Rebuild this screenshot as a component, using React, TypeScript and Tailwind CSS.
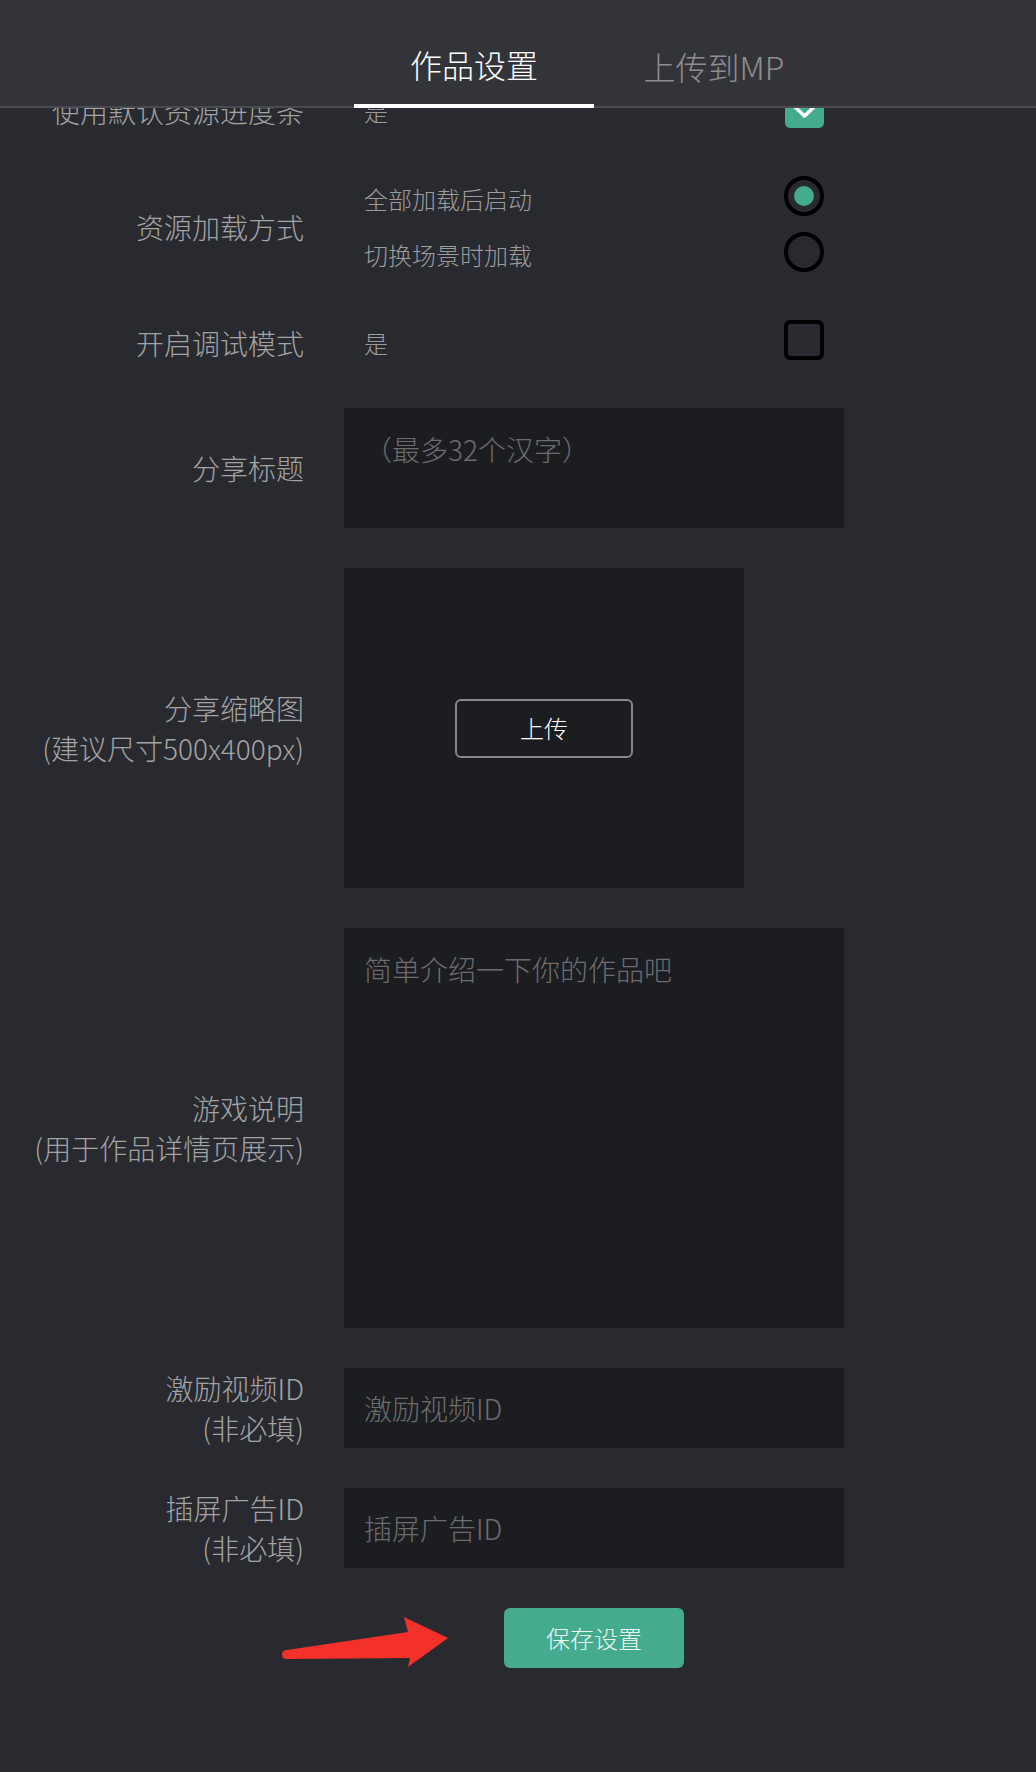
import React, { useState } from "react";

const Label: React.FC<{ lines: string[]; nudge?: boolean }> = ({ lines, nudge }) => (
  <div
    className={`w-[304px] shrink-0 text-right text-[28px] font-light leading-[40px] text-[#a3a3a5] ${
      nudge ? "pt-[5px]" : ""
    }`}
  >
    {lines.map((line) => (
      <div key={line}>{line}</div>
    ))}
  </div>
);

const Radio: React.FC<{ checked: boolean; onClick: () => void }> = ({ checked, onClick }) => (
  <button
    onClick={onClick}
    className="flex h-[40px] w-[40px] items-center justify-center rounded-full border-4 border-black"
  >
    {checked && <span className="h-[20px] w-[20px] rounded-full bg-[#45ab8e]" />}
  </button>
);

const Checkbox: React.FC<{ checked: boolean; onClick: () => void }> = ({ checked, onClick }) =>
  checked ? (
    <button
      onClick={onClick}
      className="flex h-[39px] w-[39px] items-center justify-center rounded-[5px] bg-[#45ab8e]"
    >
      <svg width="39" height="39" viewBox="0 0 39 39">
        <polyline
          points="9,17 19.5,27 30,17"
          fill="none"
          stroke="#ffffff"
          strokeWidth="3.5"
          strokeLinecap="round"
          strokeLinejoin="round"
        />
      </svg>
    </button>
  ) : (
    <button onClick={onClick} className="h-[40px] w-[40px] rounded-[6px] border-4 border-black" />
  );

const App: React.FC = () => {
  const [tab, setTab] = useState<"settings" | "upload">("settings");
  const [loadMode, setLoadMode] = useState<"all" | "scene">("all");
  const [useBar, setUseBar] = useState(true);
  const [debug, setDebug] = useState(false);

  const optionText = "pl-5 pt-[5px] text-[24px] font-light leading-[36px] text-[#9c9c9e]";
  const field =
    "w-[500px] bg-[#1c1d21] px-5 text-[28px] font-light text-[#d0d0d2] outline-none placeholder:text-[#6c6c6f]";

  return (
    <div className="relative min-h-[1772px] bg-[#292a2f] font-['Noto_Sans_CJK_SC','Noto_Sans',sans-serif]">
      {/* Tabs */}
      <div className="flex h-[108px] border-b-2 border-[#4a4b50] bg-[#333439] pl-[354px]">
        <button
          onClick={() => setTab("settings")}
          className={`h-[108px] w-[240px] self-start pt-[24px] text-center text-[32px] font-light leading-[48px] ${
            tab === "settings" ? "border-b-4 border-white text-white" : "text-[#8e8e90]"
          }`}
        >
          作品设置
        </button>
        <button
          onClick={() => setTab("upload")}
          className={`h-[108px] w-[240px] self-start pt-[24px] text-center text-[32px] font-light leading-[48px] ${
            tab === "upload" ? "border-b-4 border-white text-white" : "text-[#8e8e90]"
          }`}
        >
          上传到MP
        </button>
      </div>

      {/* Settings form, scrolled a little under the tab bar */}
      <div className="overflow-hidden">
        <div className="-mt-[20px] flex flex-col">
          <div className="flex h-[40px] items-center gap-10">
            <Label lines={["使用默认资源进度条"]} nudge />
            <div className="flex w-[500px] items-center justify-between pr-[20px]">
              <span className={optionText}>是</span>
              <Checkbox checked={useBar} onClick={() => setUseBar(!useBar)} />
            </div>
          </div>

          <div className="mt-12 flex h-[96px] items-center gap-10">
            <Label lines={["资源加载方式"]} nudge />
            <div className="flex w-[500px] flex-col gap-4 pr-[20px]">
              <div className="flex h-[40px] items-center justify-between">
                <span className={optionText}>全部加载后启动</span>
                <Radio checked={loadMode === "all"} onClick={() => setLoadMode("all")} />
              </div>
              <div className="flex h-[40px] items-center justify-between">
                <span className={optionText}>切换场景时加载</span>
                <Radio checked={loadMode === "scene"} onClick={() => setLoadMode("scene")} />
              </div>
            </div>
          </div>

          <div className="mt-12 flex h-[40px] items-center gap-10">
            <Label lines={["开启调试模式"]} nudge />
            <div className="flex w-[500px] items-center justify-between pr-[20px]">
              <span className={optionText}>是</span>
              <Checkbox checked={debug} onClick={() => setDebug(!debug)} />
            </div>
          </div>

          <div className="mt-12 flex items-center gap-10">
            <Label lines={["分享标题"]} />
            <textarea
              className={`${field} h-[120px] resize-none pt-5 leading-[42px]`}
              placeholder="（最多32个汉字）"
            />
          </div>

          <div className="mt-10 flex items-center gap-10">
            <Label lines={["分享缩略图", "(建议尺寸500x400px)"]} />
            <div className="flex h-[320px] w-[400px] items-center justify-center bg-[#1c1d21]">
              <button className="h-[59px] w-[178px] rounded-[6px] border-2 border-[#88888b] text-[24px] font-light text-white">
                上传
              </button>
            </div>
          </div>

          <div className="mt-10 flex items-center gap-10">
            <Label lines={["游戏说明", "(用于作品详情页展示)"]} />
            <textarea
              className={`${field} h-[400px] resize-none pt-5 leading-[42px]`}
              placeholder="简单介绍一下你的作品吧"
            />
          </div>

          <div className="mt-10 flex items-center gap-10">
            <Label lines={["激励视频ID", "(非必填)"]} />
            <input className={`${field} h-[80px]`} placeholder="激励视频ID" />
          </div>

          <div className="mt-10 flex items-center gap-10">
            <Label lines={["插屏广告ID", "(非必填)"]} />
            <input className={`${field} h-[80px]`} placeholder="插屏广告ID" />
          </div>

          <div className="mt-10 flex w-[844px] justify-center pl-[344px]">
            <button className="h-[60px] w-[180px] rounded-[6px] bg-[#45ab8e] text-[24px] font-light text-[#eef6f2]">
              保存设置
            </button>
          </div>
        </div>
      </div>

      {/* Red annotation arrow pointing at the save button */}
      <svg
        className="absolute left-[270px] top-[1605px]"
        width="190"
        height="70"
        viewBox="270 1605 190 70"
      >
        <path
          d="M287 1650 L408 1632 L404 1617 L448 1638 L408 1667 L410 1658 L287 1659 Q282 1659 282 1654.5 Q282 1650 287 1650 Z"
          fill="#f3312a"
        />
      </svg>
    </div>
  );
};

export default App;
